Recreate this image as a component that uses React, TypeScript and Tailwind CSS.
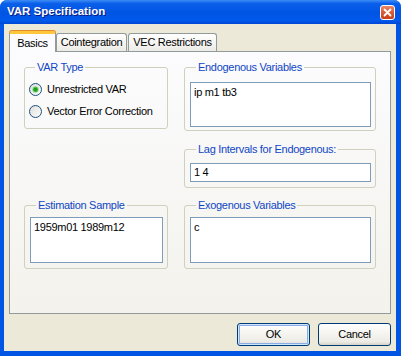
import React from "react";

const ui = "font-['Liberation_Sans',Arial,sans-serif] text-[11px] tracking-[-0.3px] text-black";

function Group({ label, className, children }: { label: string; className?: string; children: React.ReactNode }) {
  return (
    <fieldset className={`min-w-0 rounded-[3px] border border-[#D0D0BF] ${className ?? ""}`}>
      <legend className="ml-[6px] px-[2px] leading-[13px] text-[#1046C4]">{label}</legend>
      {children}
    </fieldset>
  );
}

function Radio({ checked, label }: { checked?: boolean; label: string }) {
  return (
    <div className="flex h-[16px] items-center gap-[5px]">
      <svg width="13" height="13" viewBox="0 0 13 13">
        <defs>
          <linearGradient id="rf" x1="0" y1="0" x2="1" y2="1">
            <stop offset="0" stopColor="#DCDCD7" />
            <stop offset="1" stopColor="#FFFFFF" />
          </linearGradient>
        </defs>
        <circle cx="6.5" cy="6.5" r="6" fill="url(#rf)" stroke="#1C5180" strokeWidth="1" />
        {checked && (
          <>
            <circle cx="6.5" cy="6.5" r="3.2" fill="#8EDB8E" />
            <circle cx="6.5" cy="6.5" r="2.3" fill="#21A121" />
          </>
        )}
      </svg>
      <span className="leading-[13px]">{label}</span>
    </div>
  );
}

function TextBox({ value, className }: { value: string; className: string }) {
  return (
    <div className={`border border-[#7F9DB9] bg-white pl-[3px] leading-[13px] ${className}`}>{value}</div>
  );
}

function Button({ label, primary }: { label: string; primary?: boolean }) {
  return (
    <button
      className={`flex h-[23px] w-[73px] items-center justify-center rounded-[3px] border border-[#003C74] bg-[linear-gradient(to_bottom,#FFFFFF_0%,#F4F3EE_50%,#ECEBE6_85%,#D6D0C5_100%)] ${
        primary ? "shadow-[inset_0_0_0_1px_#CEE7FF,inset_0_0_0_2px_#89ADE4]" : ""
      }`}
    >
      {label}
    </button>
  );
}

export default function App() {
  return (
    <div className={`flex h-[356px] w-[401px] flex-col rounded-t-[7px] bg-[#0055E5] ${ui}`}>
      <div className="flex h-[24px] items-center justify-between rounded-t-[7px] bg-[linear-gradient(to_bottom,#3D8DF5_0%,#0A5FEA_15%,#0054E3_55%,#0059EC_85%,#0046D4_100%)] pl-[7px] pr-[6px]">
        <span className="font-bold text-[11.5px] tracking-normal text-white [text-shadow:1px_1px_0_#0A1883]">
          VAR Specification
        </span>
        <div className="flex h-[15px] w-[15px] items-center justify-center rounded-[3px] border border-white bg-[linear-gradient(to_bottom,#E8886A_0%,#D85B37_50%,#C4401C_100%)]">
          <svg width="9" height="9" viewBox="0 0 9 9">
            <path d="M1.5 1.5 L7.5 7.5 M7.5 1.5 L1.5 7.5" stroke="#FFFFFF" strokeWidth="1.8" strokeLinecap="round" />
          </svg>
        </div>
      </div>

      <div className="mb-[5px] ml-[4px] mr-[5px] flex flex-1 flex-col bg-[#ECE9D8] px-[5px] pt-[7px]">
        <div className="flex h-[20px] items-end">
          <div className="relative z-10 -mb-px flex h-[21px] w-[47px] items-center justify-center rounded-t-[3px] border-x border-[#919B9C] border-t-[3px] border-t-[#FFC73C] bg-[#FCFCFE] shadow-[0_-1px_0_#E68B2C]">
            Basics
          </div>
          <div className="flex h-[18px] w-[71px] items-center justify-center rounded-t-[3px] border border-b-0 border-[#919B9C] bg-[linear-gradient(to_bottom,#FFFFFF,#ECEBE6)]">
            Cointegration
          </div>
          <div className="ml-px flex h-[18px] w-[89px] items-center justify-center rounded-t-[3px] border border-b-0 border-[#919B9C] bg-[linear-gradient(to_bottom,#FFFFFF,#ECEBE6)]">
            VEC Restrictions
          </div>
        </div>

        <div className="flex h-[263px] gap-[16px] border border-[#919B9C] bg-[linear-gradient(to_bottom,#FCFCFE,#F3F2EC)] pl-[14px] pt-[9px]">
          <div className="flex w-[144px] flex-col">
            <Group label="VAR Type" className="pb-[9px] pl-[4px] pt-[7px]">
              <div className="flex flex-col gap-[6px]">
                <Radio checked label="Unrestricted VAR" />
                <Radio label="Vector Error Correction" />
              </div>
            </Group>
            <Group label="Estimation Sample" className="mt-[70px] pb-[5px] pl-[5px] pr-[4px] pt-[5px]">
              <TextBox value="1959m01 1989m12" className="h-[46px] pt-[3px]" />
            </Group>
          </div>

          <div className="flex w-[192px] flex-col">
            <Group label="Endogenous Variables" className="pb-[3px] pl-[5px] pr-[4px] pt-[8px]">
              <TextBox value="ip m1 tb3" className="h-[45px] pt-[3px]" />
            </Group>
            <Group label="Lag Intervals for Endogenous:" className="mt-[12px] pb-[5px] pl-[5px] pr-[4px] pt-[7px]">
              <TextBox value="1 4" className="flex h-[19px] items-center" />
            </Group>
            <Group label="Exogenous Variables" className="mt-[11px] pb-[5px] pl-[5px] pr-[4px] pt-[5px]">
              <TextBox value="c" className="h-[46px] pt-[3px]" />
            </Group>
          </div>
        </div>

        <div className="mt-[9px] flex justify-end gap-[8px]">
          <Button label="OK" primary />
          <Button label="Cancel" />
        </div>
      </div>
    </div>
  );
}
